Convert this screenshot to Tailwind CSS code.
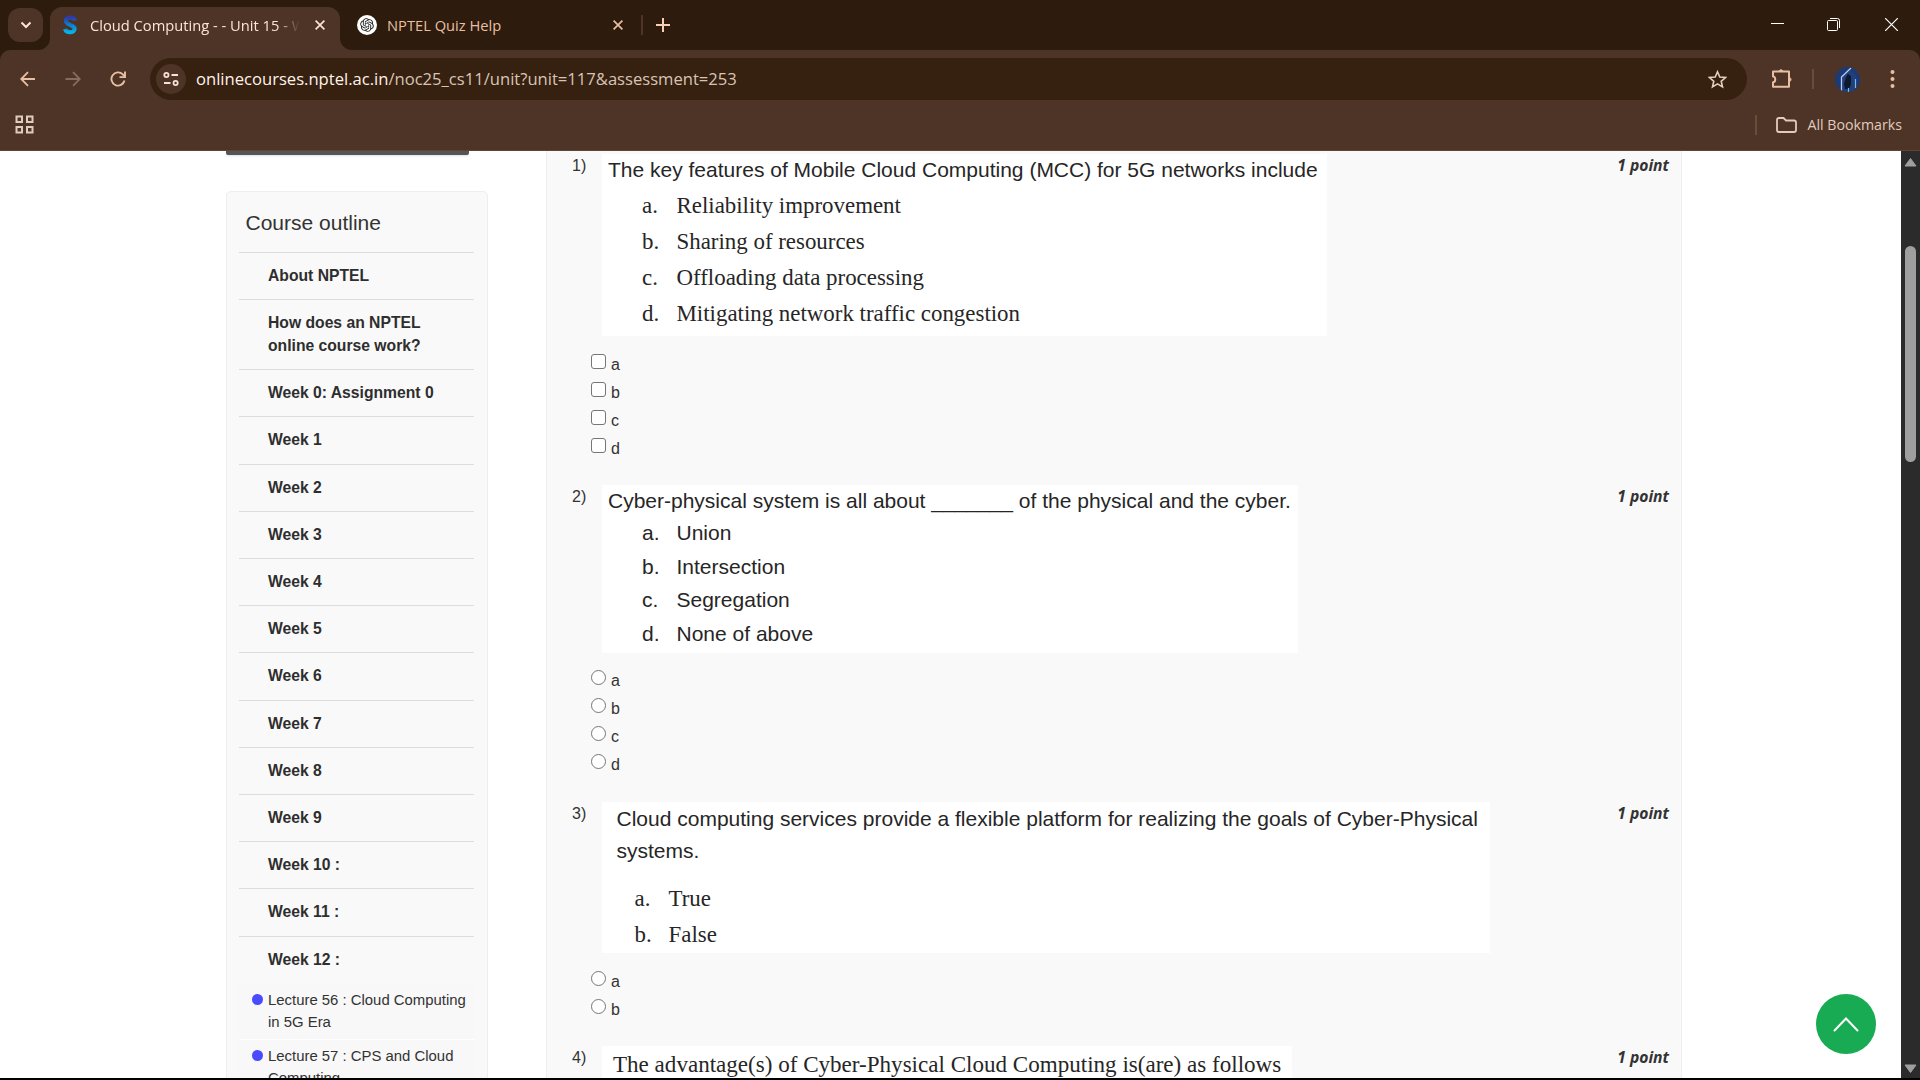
<!DOCTYPE html>
<html lang="en">
<head>
<meta charset="utf-8">
<title>Cloud Computing - - Unit 15</title>
<script src="https://cdn.jsdelivr.net/npm/@tailwindcss/browser@4"></script>
</head>
<body class="w-[1920px] h-[1080px] overflow-hidden bg-black flex flex-col font-['Liberation_Sans',sans-serif] text-[#333]">

<!-- Browser tab strip -->
<header class="h-[50px] shrink-0 bg-[#2d1b0d] flex items-start font-['Open_Sans',sans-serif] text-[14.7px]">
  <button class="ml-2 mt-2 w-[35px] h-[34px] rounded-[12px] bg-[#4d3426] flex items-center justify-center">
    <svg width="12" height="8" viewBox="0 0 12 8" fill="none" stroke="#fbe4d6" stroke-width="2"><path d="M1.5 1.5 6 6l4.500-4.500"/></svg>
  </button>
  <div class="relative ml-[7px] mt-[7px] w-[290px] h-[43px] rounded-t-[12px] bg-[#4d3426] flex items-center pb-[7px] pl-[13px] text-[#fbe4d6]">
    <svg class="absolute -left-3 bottom-0" width="12" height="12"><path d="M12 0v12H0A12 12 0 0 0 12 0" fill="#4d3426"/></svg>
    <svg class="absolute -right-3 bottom-0" width="12" height="12"><path d="M0 0v12h12A12 12 0 0 1 0 0" fill="#4d3426"/></svg>
    <svg width="14" height="20" viewBox="0 0 14 20" fill="none"><defs><linearGradient id="s" x1="0" y1="0" x2="0" y2="1"><stop stop-color="#2f3aa8"/><stop offset=".5" stop-color="#0a7fd0"/><stop offset="1" stop-color="#06b2ea"/></linearGradient></defs><path d="M12 5.500C11 1.500 3 1.500 2.800 5.800c0 4.600 8.900 3.400 8.900 8 0 4.600-8.700 4.500-9.700.2" stroke="url(#s)" stroke-width="4"/></svg>
    <span class="ml-[13px] w-[212px] whitespace-nowrap [mask-image:linear-gradient(to_right,black_88%,transparent_99%)]">Cloud Computing - - Unit 15 - W</span>
    <svg class="ml-[13px]" width="10" height="10" viewBox="0 0 10 10" stroke="#fbe4d6" stroke-width="1.700"><path d="m.6.600 8.800 8.800M9.400.600.600 9.400"/></svg>
  </div>
  <div class="mt-[7px] h-[36px] w-[301px] pl-[17px] flex items-center text-[#e8bfa3]">
    <svg width="20" height="20" viewBox="0 0 20 20"><circle cx="10" cy="10" r="10" fill="#fff"/>
      <g transform="translate(3.200 3.200) scale(.567)" fill="#1c1c1c"><path d="M22.282 9.821a5.985 5.985 0 0 0-.516-4.910 6.046 6.046 0 0 0-6.510-2.900A6.065 6.065 0 0 0 4.981 4.182a5.985 5.985 0 0 0-3.998 2.900 6.046 6.046 0 0 0 .743 7.097 5.980 5.980 0 0 0 .511 4.911 6.051 6.051 0 0 0 6.515 2.900A5.985 5.985 0 0 0 13.260 24a6.056 6.056 0 0 0 5.772-4.206 5.990 5.990 0 0 0 3.998-2.900 6.056 6.056 0 0 0-.748-7.073zM13.260 22.430a4.476 4.476 0 0 1-2.876-1.041l.142-.080 4.778-2.758a.795.795 0 0 0 .393-.681v-6.737l2.020 1.169a.071.071 0 0 1 .038.052v5.583a4.504 4.504 0 0 1-4.495 4.493zM3.600 18.304a4.471 4.471 0 0 1-.535-3.014l.142.085 4.783 2.759a.771.771 0 0 0 .781 0l5.843-3.369v2.332a.080.080 0 0 1-.033.062L9.740 19.950a4.500 4.500 0 0 1-6.140-1.646zM2.341 7.896a4.485 4.485 0 0 1 2.366-1.973V11.600a.766.766 0 0 0 .388.677l5.815 3.354-2.020 1.169a.076.076 0 0 1-.071 0l-4.830-2.787A4.504 4.504 0 0 1 2.341 7.872zm16.596 3.856L13.104 8.364 15.119 7.200a.076.076 0 0 1 .071 0l4.830 2.791a4.494 4.494 0 0 1-.676 8.105v-5.678a.790.790 0 0 0-.407-.667zm2.011-3.023-.142-.085-4.774-2.782a.776.776 0 0 0-.785 0L9.409 9.230V6.897a.066.066 0 0 1 .028-.062l4.831-2.787a4.499 4.499 0 0 1 6.680 4.660zM8.307 12.863l-2.020-1.164a.080.080 0 0 1-.038-.057V6.074a4.499 4.499 0 0 1 7.376-3.453l-.142.081-4.778 2.758a.795.795 0 0 0-.393.681zm1.097-2.366 2.602-1.500 2.607 1.500v3l-2.597 1.500-2.607-1.500z"/></g></svg>
    <span class="ml-[10px] w-[226px] whitespace-nowrap">NPTEL Quiz Help</span>
    <svg width="10" height="10" viewBox="0 0 10 10" stroke="#e8bfa3" stroke-width="1.700"><path d="m.6.600 8.800 8.800M9.400.600.600 9.400"/></svg>
  </div>
  <div class="mt-[15px] w-[2px] h-[20px] bg-[#4d3426]"></div>
  <svg class="mt-[18px] ml-[13px]" width="14" height="14" viewBox="0 0 14 14" stroke="#fbcfb0" stroke-width="2"><path d="M7 0v14M0 7h14"/></svg>
  <div class="ml-auto mr-[22px] mt-[18px] flex gap-[43px]">
    <svg width="13" height="13" stroke="#fff"><path d="M0 5.500h13"/></svg>
    <svg width="13" height="13" viewBox="0 0 13 13" fill="none" stroke="#fff"><rect x=".5" y="2.500" width="10" height="10" rx="1"/><path d="M3 .500h7.500a2 2 0 0 1 2 2V10"/></svg>
    <svg class="ml-[2px]" width="13" height="13" stroke="#fff" stroke-width="1.200"><path d="m0 0 13 13M13 0 0 13"/></svg>
  </div>
</header>

<!-- Toolbar and bookmarks bar -->
<div class="h-[101px] shrink-0 bg-[#2d1b0d] font-['Open_Sans',sans-serif]">
<div class="h-full bg-[#4d3426] rounded-t-[10px] border-b border-[#5d4638]">
  <div class="h-[58px] flex items-center pl-[20px] text-[#e8bfa3]">
    <svg width="16" height="16" viewBox="0 0 16 16" fill="none" stroke="#e8bfa3" stroke-width="1.800"><path d="M15 8H1.500M8 1.200 1.200 8 8 14.800"/></svg>
    <svg class="ml-[29px]" width="16" height="16" viewBox="0 0 16 16" fill="none" stroke="#866c5c" stroke-width="1.800"><path d="M.5 8h14M8 1.200 14.800 8 8 14.800"/></svg>
    <svg class="ml-[29px]" width="16" height="16" viewBox="0 0 16 16" fill="none" stroke="#e8bfa3" stroke-width="1.900"><path d="M14.500 9.500A6.600 6.600 0 1 1 12.800 3.400L14.500 5.300"/><path d="M15 .500v5.600H9.500"/></svg>
    <div class="ml-[24px] w-[1597px] h-[42px] rounded-full bg-[#36200f] flex items-center pl-[6px] pr-[20px]">
      <div class="size-[30px] rounded-full bg-[#4d3426] flex items-center justify-center">
        <svg width="16" height="14" viewBox="0 0 16 14" fill="none" stroke="#f5e2d5" stroke-width="1.800"><circle cx="3.400" cy="3" r="2.100"/><path d="M8.500 3H15M1 11h6.500"/><circle cx="12.600" cy="11" r="2.100"/></svg>
      </div>
      <div class="ml-[10px] pt-[1px] whitespace-nowrap text-[16.6px] text-[#d8c4b6]"><span class="text-[#fff3ea]">onlinecourses.nptel.ac.in</span>/noc25_cs11/unit?unit=117&amp;assessment=253</div>
      <svg class="ml-auto" width="19" height="19" viewBox="0 0 19 19" fill="none" stroke="#e3cfc1" stroke-width="1.600"><path d="m9.500 1.800 2.300 5.200 5.700.500-4.300 3.800 1.300 5.600-5-3-5 3 1.300-5.600L1.500 7.500 7.200 7z"/></svg>
    </div>
    <svg class="ml-[24px]" width="22" height="22" viewBox="0 0 22 22" fill="none" stroke="#e8bfa3" stroke-width="2" stroke-linejoin="round"><path d="M2 3.500h16v15.200H2v-4.500c3 0 3-5.800 0-5.800z"/><path d="M8 3.500c0-2.200 4-2.200 4 0zM18 9.500c2.700 0 2.700 4 0 4z" fill="#e8bfa3" stroke-width="1"/></svg>
    <div class="ml-[19px] w-[2px] h-[20px] bg-[#6b4c3b]"></div>
    <svg class="ml-[21px]" width="25" height="25" viewBox="0 0 25 25"><defs><clipPath id="c"><circle cx="12.500" cy="12.500" r="12.500"/></clipPath></defs><g clip-path="url(#c)"><path d="M0 0h25v25H0z" fill="#1c3a78"/><path d="M8 9 15 3l6 6v16H8z" fill="#20407c"/><path d="M6.500 25V10L16 1" fill="none" stroke="#b9c8ee" stroke-width="1.300"/><path d="M10 22l-1-5 2-7 2-3 3 2v8l-2 5z" fill="#10182c"/><path d="M20.500 12v9M13.500 21v4" stroke="#7fb7e0" stroke-width="1.200"/></g></svg>
    <svg class="ml-[30px]" width="5" height="20" fill="#e8bfa3"><circle cx="2.500" cy="3" r="2"/><circle cx="2.500" cy="10" r="2"/><circle cx="2.500" cy="17" r="2"/></svg>
  </div>
  <div class="h-[33px] flex items-center pl-[15px] pr-[18px]">
    <svg width="19" height="19" viewBox="0 0 19 19" fill="none" stroke="#e0cbbd" stroke-width="2"><path d="M1.500 1.500h5.500v5.500H1.500zM12 1.500h5.500v5.500H12zM1.500 12h5.500v5.500H1.500zM12 12h5.500v5.500H12z"/></svg>
    <div class="ml-auto w-[2px] h-[20px] bg-[#6b4c3b]"></div>
    <svg class="ml-[19px]" width="21" height="16" viewBox="0 0 21 16" fill="none" stroke="#e0cbbd" stroke-width="1.800"><path d="M1 13V3q0-2 2-2h4.500l2.500 2.500h8q2 0 2 2V13q0 2-2 2H3q-2 0-2-2z"/></svg>
    <span class="ml-[10px] text-[14.2px] text-[#e0cbbd]">All Bookmarks</span>
  </div>
</div>
</div>

<!-- Page viewport -->
<div class="h-[927px] shrink-0 flex bg-white overflow-hidden">
  <div class="relative w-[1901px] h-full overflow-hidden flex items-start pl-[226px]">

    <!-- Sidebar -->
    <aside class="w-[262px] shrink-0">
      <div class="h-[4px] w-[243px] bg-[#555] rounded-b-[2px] shadow"></div>
      <nav class="mt-[36px] h-[1000px] border border-[#eee] rounded-[5px] bg-[#f9f9f9] pl-[12px] pr-[13px]">
        <h2 class="h-[59.6px] pl-[6.5px] leading-[62px] text-[21px]">Course outline</h2>
        <ul id="weeks" class="font-bold text-[15.7px] leading-[23.2px] text-[#2e2e2e]"></ul>
        <ul class="mt-[1px] text-[14.9px] leading-[22px] bg-[#f8f8f8]">
          <li class="h-[56px] border-b border-white pt-[5px] pl-[13px] flex"><i class="mt-[5px] size-[11px] rounded-full bg-[#4a4aff] mr-[5px] shrink-0"></i><span class="whitespace-nowrap">Lecture 56 : Cloud Computing<br>in 5G Era</span></li>
          <li class="h-[56px] pt-[5px] pl-[13px] flex"><i class="mt-[5px] size-[11px] rounded-full bg-[#4a4aff] mr-[5px] shrink-0"></i><span>Lecture 57 : CPS and Cloud<br>Computing</span></li>
        </ul>
      </nav>
    </aside>

    <!-- Assessment -->
    <main class="ml-[58px] w-[1136px] h-[927px] overflow-hidden shrink-0 bg-[#f9f9f9] border-x border-[#eee] pt-[3px]">

      <section class="h-[331px] flex items-start pl-[25px] pr-[12px]">
        <span class="w-[15px] leading-[24px] text-[16px]">1)</span>
        <div class="ml-[4px]">
          <div class="ml-[11px] w-[725px] h-[182px] bg-white text-[#262626] text-[22.9px] leading-[36px] font-['Liberation_Serif',serif] whitespace-nowrap">
            <p class="pl-[6px] text-[21px] leading-[32px] mb-[2px] font-['Liberation_Sans',sans-serif]">The key features of Mobile Cloud Computing (MCC) for 5G networks include</p>
            <p class="pl-[40px] flex"><span class="w-[34.500px]">a.</span>Reliability improvement</p>
            <p class="pl-[40px] flex"><span class="w-[34.500px]">b.</span>Sharing of resources</p>
            <p class="pl-[40px] flex"><span class="w-[34.500px]">c.</span>Offloading data processing</p>
            <p class="pl-[40px] flex"><span class="w-[34.500px]">d.</span>Mitigating network traffic congestion</p>
          </div>
          <div class="mt-[18px]" data-kind="box" data-opts="abcd"></div>
        </div>
        <em class="ml-auto leading-[23px] text-[15.7px] font-bold font-['Open_Sans',sans-serif]">1 point</em>
      </section>

      <section class="h-[317px] flex items-start pl-[25px] pr-[12px]">
        <span class="w-[15px] leading-[23px] text-[16px]">2)</span>
        <div class="ml-[4px]">
          <div class="ml-[11px] w-[696px] h-[168px] bg-white text-[#262626] text-[21px] leading-[33.5px] whitespace-nowrap">
            <p class="pl-[6px] leading-[31px]">Cyber-physical system is all about _______ of the physical and the cyber.</p>
            <p class="pl-[40px] flex"><span class="w-[34.500px]">a.</span>Union</p>
            <p class="pl-[40px] flex"><span class="w-[34.500px]">b.</span>Intersection</p>
            <p class="pl-[40px] flex"><span class="w-[34.500px]">c.</span>Segregation</p>
            <p class="pl-[40px] flex"><span class="w-[34.500px]">d.</span>None of above</p>
          </div>
          <div class="mt-[17px]" data-kind="radio" data-opts="abcd"></div>
        </div>
        <em class="ml-auto leading-[22px] text-[15.7px] font-bold font-['Open_Sans',sans-serif]">1 point</em>
      </section>

      <section class="h-[244px] flex items-start pl-[25px] pr-[12px]">
        <span class="w-[15px] leading-[23px] text-[16px]">3)</span>
        <div class="ml-[4px]">
          <div class="ml-[11px] w-[888px] h-[151px] bg-white text-[#262626] text-[22.9px] leading-[36px] font-['Liberation_Serif',serif] whitespace-nowrap">
            <p class="pl-[14.500px] pt-[1px] text-[21px] leading-[32px] mb-[14px] font-['Liberation_Sans',sans-serif]">Cloud computing services provide a flexible platform for realizing the goals of Cyber-Physical<br>systems.</p>
            <p class="pl-[32.500px] flex"><span class="w-[34px]">a.</span>True</p>
            <p class="pl-[32.500px] flex"><span class="w-[34px]">b.</span>False</p>
          </div>
          <div class="mt-[18px]" data-kind="radio" data-opts="ab"></div>
        </div>
        <em class="ml-auto leading-[22px] text-[15.7px] font-bold font-['Open_Sans',sans-serif]">1 point</em>
      </section>

      <section class="flex items-start pl-[25px] pr-[12px]">
        <span class="w-[15px] leading-[23px] text-[16px]">4)</span>
        <div class="ml-[15px] w-[690px] h-[60px] bg-white text-[#262626] pl-[11px] pt-[1px] text-[23.07px] leading-[35px] font-['Liberation_Serif',serif] whitespace-nowrap">The advantage(s) of Cyber-Physical Cloud Computing is(are) as follows</div>
        <em class="ml-auto leading-[22px] text-[15.7px] font-bold font-['Open_Sans',sans-serif]">1 point</em>
      </section>
    </main>

    <!-- Floating back-to-top button -->
    <button class="absolute left-[1816px] top-[843px] size-[60px] rounded-full bg-[#18ab53] flex items-center justify-center">
      <svg width="26" height="15" viewBox="0 0 26 15" fill="none" stroke="#fff" stroke-width="2" stroke-linecap="round"><path d="m1.500 13.500 11.500-12 11.500 12"/></svg>
    </button>
  </div>

  <!-- Scrollbar -->
  <div class="w-[19px] h-full bg-[#2b2b2b] flex flex-col items-center pt-[6px] pb-[4px]">
    <svg width="13" height="10"><path d="M6.500 1.500 12 9H1z" fill="#9f9f9f" stroke="#9f9f9f" stroke-linejoin="round"/></svg>
    <div class="mt-[79px] w-[11px] h-[216px] rounded-full bg-[#9f9f9f]"></div>
    <svg class="mt-auto" width="13" height="10"><path d="M6.500 8.500 12 1H1z" fill="#9f9f9f" stroke="#9f9f9f" stroke-linejoin="round"/></svg>
  </div>
</div>

<script>
const weeks = ['About NPTEL','How does an NPTEL<br>online course work?','Week 0: Assignment 0'];
for (let i = 1; i <= 12; i++) weeks.push('Week ' + i + (i > 9 ? ' :' : ''));
document.getElementById('weeks').innerHTML = weeks.map(w =>
  `<li class="border-t border-[#ddd] pt-[11px] pb-[12px] pl-[29px]">${w}</li>`).join('');
document.querySelectorAll('[data-opts]').forEach(el => {
  const shape = el.dataset.kind === 'box' ? 'rounded-[3px]' : 'rounded-full';
  el.innerHTML = [...el.dataset.opts].map(o =>
    `<label class="flex items-start h-[27.9px] text-[16px] leading-[20px]"><span class="size-[15px] border border-[#767676] bg-white ${shape}"></span><span class="ml-[5px] pt-[1px]">${o}</span></label>`).join('');
});
</script>
</body>
</html>
